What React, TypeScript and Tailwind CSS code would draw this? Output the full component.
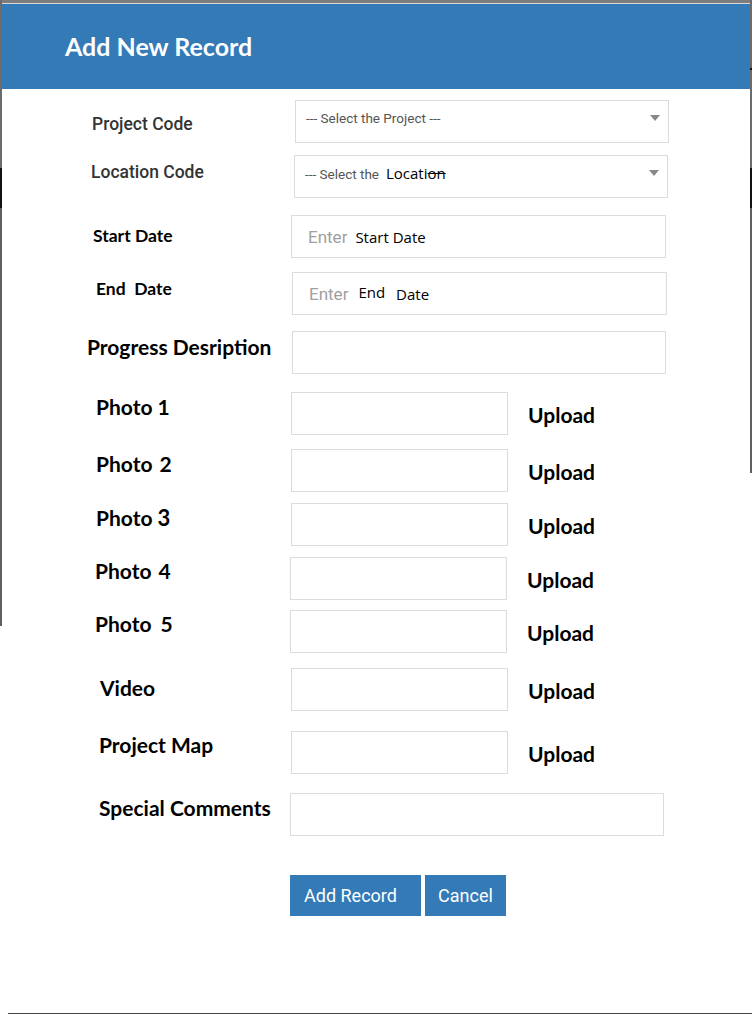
import React from 'react';

const lbl = "font-[Lato,sans-serif] font-bold text-[21px] leading-none text-black whitespace-nowrap";
const box = "h-[43px] border border-[#dcdcdc] bg-white";

function Arrow({ className }: { className: string }) {
  return (
    <svg width="10" height="6" viewBox="0 0 10 6" className={className}>
      <path d="M0 0 L10 0 L5 6 Z" fill="#888" />
    </svg>
  );
}

function Upload() {
  return <span className={"ml-[20px] pt-[12px] " + lbl}>Upload</span>;
}

export default function App() {
  return (
    <div className="w-[752px] h-[1020px] bg-white flex flex-col overflow-hidden">
      <div className="flex">
        {/* left backdrop edge */}
        <div className="w-[2px] flex flex-col">
          <div className="h-[168px] bg-[#6b6b6b]" />
          <div className="h-[40px] bg-[#111]" />
          <div className="h-[418px] bg-[#5f5f5f]" />
        </div>

        <div className="w-[748px] flex flex-col">
          <div className="h-[3px] bg-[#7d7d7d]" />
          <div className="h-px bg-[#d8d8d8]" />
          <div className="h-[85px] bg-[#337ab7] flex items-center pl-[63px]">
            <h1 className="font-[Lato,sans-serif] font-bold text-[25px] leading-none text-white">Add New Record</h1>
          </div>

          {/* Project code */}
          <div className="mt-[11px] flex items-start">
            <div className="w-[293px] pl-[90px] pt-[16px] font-[Roboto,sans-serif] font-medium text-[17.5px] leading-none text-[#333]">Project Code</div>
            <div className={"w-[374px] flex items-start justify-between pl-[10px] pr-[8px] pt-[11px] " + box}>
              <span className="font-[Roboto,sans-serif] text-[13.5px] leading-none text-[#555]">--- Select the Project ---</span>
              <Arrow className="mt-[3px]" />
            </div>
          </div>

          {/* Location code */}
          <div className="mt-[12px] flex items-start">
            <div className="w-[292px] pl-[89px] pt-[9px] font-[Roboto,sans-serif] font-medium text-[17.5px] leading-none text-[#333]">Location Code</div>
            <div className={"w-[374px] flex items-start justify-between pl-[10px] pr-[8px] pt-[10px] " + box}>
              <span className="flex items-baseline leading-none">
                <span className="font-[Roboto,sans-serif] text-[13.5px] text-[#555]">--- Select the</span>
                <span className="ml-[7px] font-['Open_Sans',sans-serif] text-[15px] text-black">Locati<span className="line-through">on</span></span>
              </span>
              <Arrow className="mt-[4px]" />
            </div>
          </div>

          {/* Start date */}
          <div className="mt-[17px] flex items-start">
            <div className="w-[289px] pl-[91px] pt-[12px] font-[Lato,sans-serif] font-bold text-[17.5px] leading-none text-black">Start Date</div>
            <div className={"w-[375px] flex items-baseline pl-[16px] pt-[13px] leading-none " + box}>
              <span className="font-[Roboto,sans-serif] text-[17px] text-[#a0a0a0]">Enter</span>
              <span className="ml-[8px] font-['Open_Sans',sans-serif] text-[15px] text-black">Start Date</span>
            </div>
          </div>

          {/* End date */}
          <div className="mt-[14px] flex items-start">
            <div className="w-[290px] pl-[94px] pt-[8px] font-[Lato,sans-serif] font-bold text-[17.5px] leading-none text-black whitespace-pre">End  Date</div>
            <div className={"w-[375px] flex items-baseline pl-[16px] pt-[13px] leading-none " + box}>
              <span className="font-[Roboto,sans-serif] text-[17px] text-[#a0a0a0]">Enter</span>
              <span className="ml-[10px] -translate-y-[2px] font-['Open_Sans',sans-serif] text-[15px] text-black">End</span>
              <span className="ml-[11px] font-['Open_Sans',sans-serif] text-[15px] text-black">Date</span>
            </div>
          </div>

          {/* Progress */}
          <div className="mt-[16px] flex items-start">
            <div className={"w-[290px] pl-[85px] pt-[5px] " + lbl}>Progress Desription</div>
            <div className={"w-[374px] " + box} />
          </div>

          <div className="mt-[18px] flex items-start">
            <div className={"w-[289px] pl-[94px] pt-[4px] " + lbl}>Photo 1</div>
            <div className={"w-[217px] " + box} />
            <Upload />
          </div>

          <div className="mt-[14px] flex items-start">
            <div className={"w-[289px] pl-[94px] pt-[4px] " + lbl}>Photo <span className="ml-[2px]">2</span></div>
            <div className={"w-[217px] " + box} />
            <Upload />
          </div>

          <div className="mt-[11px] flex items-start">
            <div className={"w-[289px] pl-[94px] pt-[4px] " + lbl}>Photo <span className="text-[22px]">3</span></div>
            <div className={"w-[217px] " + box} />
            <Upload />
          </div>

          <div className="mt-[11px] flex items-start">
            <div className={"w-[288px] pl-[93px] pt-[3px] " + lbl}>Photo <span className="ml-[2px]">4</span></div>
            <div className={"w-[217px] " + box} />
            <Upload />
          </div>

          <div className="mt-[10px] flex items-start">
            <div className={"w-[288px] pl-[93px] pt-[3px] " + lbl}>Photo <span className="ml-[4px]">5</span></div>
            <div className={"w-[217px] " + box} />
            <Upload />
          </div>

          <div className="mt-[15px] flex items-start">
            <div className={"w-[289px] pl-[98px] pt-[9px] " + lbl}>Video</div>
            <div className={"w-[217px] " + box} />
            <Upload />
          </div>

          <div className="mt-[20px] flex items-start">
            <div className={"w-[289px] pl-[97px] pt-[3px] " + lbl}>Project Map</div>
            <div className={"w-[217px] " + box} />
            <Upload />
          </div>

          <div className="mt-[19px] flex items-start">
            <div className={"w-[288px] pl-[97px] pt-[4px] " + lbl}>Special Comments</div>
            <div className={"w-[374px] " + box} />
          </div>

          <div className="mt-[39px] flex gap-[4px] pl-[288px]">
            <button className="w-[131px] h-[41px] bg-[#337ab7] flex items-center pl-[14px] font-[Roboto,sans-serif] text-[18px] leading-none text-white">Add Record</button>
            <button className="w-[81px] h-[41px] bg-[#337ab7] flex items-center justify-center font-[Roboto,sans-serif] text-[18px] leading-none text-white">Cancel</button>
          </div>
        </div>

        {/* right backdrop edge */}
        <div className="w-[2px] flex flex-col">
          <div className="h-[68px] bg-[#6b6b6b]" />
          <div className="h-[2px] bg-[#111]" />
          <div className="h-[98px] bg-[#6b6b6b]" />
          <div className="h-[40px] bg-[#111]" />
          <div className="h-[265px] bg-[#5f5f5f]" />
        </div>
      </div>

      <div className="mt-[97px] ml-[8px] h-px bg-[#444]" />
    </div>
  );
}
